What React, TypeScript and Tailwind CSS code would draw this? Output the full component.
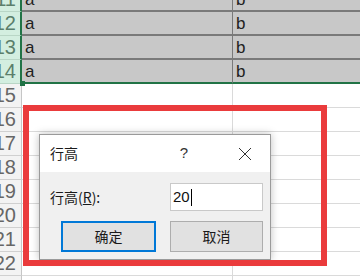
import React from "react";

const rows = [
  { n: 11, sel: true },
  { n: 12, sel: true },
  { n: 13, sel: true },
  { n: 14, sel: true },
  { n: 15, sel: false },
  { n: 16, sel: false },
  { n: 17, sel: false },
  { n: 18, sel: false },
  { n: 19, sel: false },
  { n: 20, sel: false },
  { n: 21, sel: false },
  { n: 22, sel: false },
  { n: 23, sel: false },
];

export default function App() {
  return (
    <div
      className="relative w-[360px] h-[280px] overflow-hidden bg-white"
      style={{ fontFamily: '"Liberation Sans", "Noto Sans CJK SC", sans-serif' }}
    >
      <div className="flex flex-col mt-[-12px]">
        {rows.map((r) => (
          <div key={r.n} className="flex h-[24px]">
            <div
              className={
                r.sel
                  ? "w-[22px] shrink-0 overflow-hidden flex items-end justify-end pr-[4px] pb-[2px] bg-[#d3eee0] border-b border-[#b9d6c6] border-r-2 border-r-[#217346] text-[#5b7e6b] text-[20px] leading-none"
                  : "w-[22px] shrink-0 overflow-hidden flex items-end justify-end pr-[5px] pb-[2px] bg-[#f3f3f3] border-b border-[#d0d0d0] border-r border-r-[#c6c6c6] text-[#666666] text-[20px] leading-none"
              }
            >
              <span className="whitespace-nowrap">{r.n}</span>
            </div>
            {r.sel ? (
              <>
                <div
                  className={
                    r.n === 14
                      ? "w-[211px] shrink-0 bg-[#c8c8c8] border-b-2 border-[#217346] border-r border-r-[#7a7a7a] flex items-end pl-[3px] pb-[2px] text-[17px] leading-none text-[#222]"
                      : "w-[211px] shrink-0 bg-[#c8c8c8] border-b-2 border-[#7a7a7a] border-r border-r-[#7a7a7a] flex items-end pl-[3px] pb-[2px] text-[17px] leading-none text-[#222]"
                  }
                >
                  a
                </div>
                <div
                  className={
                    r.n === 14
                      ? "flex-1 bg-[#c8c8c8] border-b-2 border-[#217346] flex items-end pl-[3px] pb-[2px] text-[17px] leading-none text-[#222]"
                      : "flex-1 bg-[#c8c8c8] border-b-2 border-[#7a7a7a] flex items-end pl-[3px] pb-[2px] text-[17px] leading-none text-[#222]"
                  }
                >
                  b
                </div>
              </>
            ) : (
              <>
                <div className="w-[211px] shrink-0 border-b border-[#dadada] border-r border-r-[#dadada]" />
                <div className="flex-1 border-b border-[#dadada]" />
              </>
            )}
          </div>
        ))}
      </div>

      {/* fill handle */}
      <div className="absolute left-[20px] top-[81px] w-[5px] h-[5px] bg-[#217346]" />

      {/* Dialog */}
      <div
        className="absolute left-[39px] top-[134px] w-[232px] h-[126px] border border-[#9a9a9a] bg-[#f0f0f0] shadow-[0_0_8px_rgba(0,0,0,0.25)] flex flex-col"
        style={{ fontFamily: '"Noto Sans CJK SC", "Noto Sans", sans-serif' }}
      >
        <div className="h-[37px] bg-white flex items-center pl-[10px] pr-[20px] text-[14px] text-[#1a1a1a]">
          <span className="flex-1">行高</span>
          <span className="text-[15px] text-[#333] mr-[50px]" style={{ fontFamily: '"Liberation Sans", sans-serif' }}>?</span>
          <svg width="14" height="14" viewBox="0 0 14 14" className="mr-[-2px]">
            <path d="M1 1 L13 13 M13 1 L1 13" stroke="#333" strokeWidth="1" fill="none" />
          </svg>
        </div>
        <div className="flex-1 pl-[10px] pt-[11px]">
          <div className="flex items-center h-[28px]">
            <span className="w-[120px] shrink-0 text-[14px] text-[#1a1a1a]">
              行高(<span className="underline">R</span>):
            </span>
            <div className="shrink-0 w-[93px] h-[28px] bg-white border border-[#c9c9c9] flex items-center pl-[2px] text-[15px] text-[#111]" style={{ fontFamily: '"Liberation Sans", sans-serif' }}>
              20<span className="inline-block w-px h-[17px] bg-black ml-[1px]" />
            </div>
          </div>
          <div className="flex mt-[10px]">
            <div className="shrink-0 ml-[11px] w-[95px] h-[31px] bg-[#e1e1e1] border-2 border-[#0078d7] flex items-center justify-center text-[14px] text-[#1a1a1a]">
              确定
            </div>
            <div className="shrink-0 ml-[14px] w-[93px] h-[31px] bg-[#e1e1e1] border border-[#adadad] flex items-center justify-center text-[14px] text-[#1a1a1a]">
              取消
            </div>
          </div>
        </div>
      </div>

      {/* red annotation */}
      <div className="absolute left-[23px] top-[105px] w-[304px] h-[161px] border-[6px] border-[#ea3b3c]" />
    </div>
  );
}
